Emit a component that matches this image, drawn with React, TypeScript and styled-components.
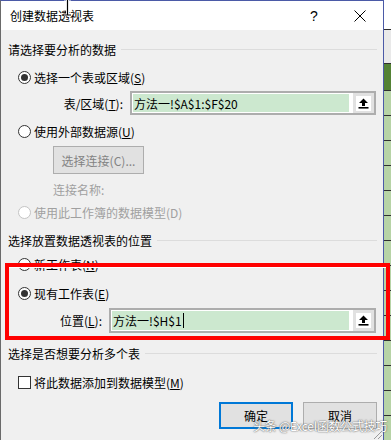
import styled, { createGlobalStyle } from 'styled-components';

const GlobalStyle = createGlobalStyle`
  html, body {
    margin: 0;
    padding: 0;
    background: #ffffff;
  }
  body {
    font-family: "Noto Sans CJK SC", "Noto Sans", sans-serif;
    font-size: 12px;
    color: #000000;
  }
`;

const COLOR = {
  body: '#f0f0f0',
  border: '#adadad',
  btn: '#e1e1e1',
  green: '#cce8cf',
  disabled: '#a0a0a0',
  frame: '#4b5aa7',
  red: '#ff0000',
};

const Screen = styled.div`
  position: relative;
  width: 391px;
  height: 440px;
  display: flex;
  overflow: hidden;
`;

const Dialog = styled.div`
  width: 384px;
  height: 440px;
  border-left: 1px solid #6a6a6a;
  border-right: 1px solid ${COLOR.frame};
  border-top: 1px solid ${COLOR.frame};
  box-sizing: border-box;
  display: flex;
  flex-direction: column;
  background: ${COLOR.body};
`;

const TitleBar = styled.div`
  height: 29px;
  background: #ffffff;
  display: flex;
  align-items: center;
  padding-left: 9px;
`;

const Title = styled.div`
  flex: 1;
  font-size: 12px;
`;

const TitleButton = styled.div`
  width: 46px;
  height: 29px;
  display: flex;
  align-items: center;
  justify-content: center;
  font-size: 14px;
  font-family: "Liberation Sans", sans-serif;
`;

const Body = styled.div`
  flex: 1;
  display: flex;
  flex-direction: column;
  padding: 0 6px 0 7px;
  position: relative;
`;

const Row = styled.div<{ $mt: number; $h?: number; $indent?: number }>`
  margin-top: ${(p) => p.$mt}px;
  height: ${(p) => p.$h ?? 18}px;
  padding-left: ${(p) => p.$indent ?? 0}px;
  display: flex;
  align-items: center;
  flex-shrink: 0;
`;

const Heading = styled.span`
  white-space: nowrap;
  margin-right: 5px;
`;

const Rule = styled.div`
  flex: 1;
  height: 1px;
  background: #dcdcdc;
`;

const Radio = styled.span<{ $checked?: boolean; $disabled?: boolean }>`
  width: 13px;
  height: 13px;
  box-sizing: border-box;
  border-radius: 50%;
  border: 1px solid ${(p) => (p.$disabled ? '#c4c4c4' : '#333333')};
  background: #ffffff;
  display: flex;
  align-items: center;
  justify-content: center;
  margin-right: 3px;
  &::after {
    content: '';
    display: ${(p) => (p.$checked ? 'block' : 'none')};
    width: 7px;
    height: 7px;
    border-radius: 50%;
    background: #333333;
  }
`;

const Check = styled.span`
  width: 13px;
  height: 13px;
  box-sizing: border-box;
  border: 1px solid #333333;
  background: #ffffff;
  margin-right: 3px;
`;

const Label = styled.span<{ $disabled?: boolean }>`
  color: ${(p) => (p.$disabled ? COLOR.disabled : '#000000')};
  white-space: nowrap;
`;

const FieldLabel = styled.span<{ $w: number }>`
  width: ${(p) => p.$w}px;
  text-align: right;
  padding-right: 7px;
  white-space: nowrap;
`;

const RefBox = styled.div`
  flex: 1;
  height: 100%;
  box-sizing: border-box;
  border: 2px solid ${COLOR.border};
  display: flex;
  margin-right: 1px;
`;

const RefInput = styled.div`
  flex: 1;
  background: #ffffff;
  padding: 1px 4px 1px 1px;
  display: flex;
`;

const RefFill = styled.div`
  flex: 1;
  background: ${COLOR.green};
  display: flex;
  align-items: center;
  padding-left: 1px;
`;

const Caret = styled.span`
  width: 1px;
  height: 15px;
  background: #000000;
  margin-left: 1px;
`;

const PickButton = styled.div`
  width: 21px;
  background: ${COLOR.btn};
  display: flex;
  align-items: center;
  justify-content: center;
`;

const PickIcon = styled.div`
  width: 15px;
  height: 15px;
  background: #ffffff;
  display: flex;
  align-items: center;
  justify-content: center;
`;

const Button = styled.div<{ $primary?: boolean; $disabled?: boolean; $w: number }>`
  width: ${(p) => p.$w}px;
  height: 100%;
  box-sizing: border-box;
  background: ${COLOR.btn};
  border: ${(p) => (p.$primary ? '2px solid #0078d7' : `1px solid ${COLOR.border}`)};
  color: ${(p) => (p.$disabled ? '#838383' : '#000000')};
  display: flex;
  align-items: center;
  justify-content: center;
  font-size: 12px;
`;

const ButtonRow = styled(Row)`
  justify-content: flex-end;
  gap: 10px;
  padding-right: 0;
`;

const Grip = styled.svg`
  position: absolute;
  right: 0;
  bottom: 0;
`;

const Watermark = styled.div`
  position: absolute;
  right: 4px;
  bottom: 6px;
  color: #ffffff;
  font-size: 12px;
  letter-spacing: -0.3px;
  text-shadow: 0 0 1px #555555, 0 0 2px #777777;
  white-space: nowrap;
`;

const Annotation = styled.div`
  position: absolute;
  left: 5px;
  top: 263px;
  width: 385px;
  height: 77px;
  box-sizing: border-box;
  border: 4px solid ${COLOR.red};
  box-shadow: inset 0 1px 0 #ffffff;
  pointer-events: none;
`;

const Sheet = styled.div`
  width: 7px;
  display: flex;
  flex-direction: column;
`;

const SheetCell = styled.div<{ $h: number; $bg: string }>`
  height: ${(p) => p.$h}px;
  background: ${(p) => p.$bg};
  border-bottom: 1px solid #2f2f2f;
  flex-shrink: 0;
`;

const Cursor = styled.svg`
  position: absolute;
  left: 63px;
  top: -2px;
`;

const U = styled.span`
  text-decoration: underline;
  text-underline-offset: 1px;
`;

function UploadIcon() {
  return (
    <svg width="11" height="11" viewBox="0 0 11 11">
      <path d="M5.5 0.5 L10 5 L7 5 L7 8 L4 8 L4 5 L1 5 Z" fill="#000" />
      <rect x="0.5" y="9" width="10" height="1.6" fill="#000" />
    </svg>
  );
}

const sheetRows = [
  { h: 29, bg: '#ffffff' },
  { h: 33, bg: '#e9e9e9' },
  { h: 26, bg: '#548235' },
  ...Array.from({ length: 15 }, () => ({ h: 24, bg: '#b7d3a6' })),
];

export default function App() {
  return (
    <>
      <GlobalStyle />
      <Screen>
        <Dialog>
          <TitleBar>
            <Title>创建数据透视表</Title>
            <TitleButton>?</TitleButton>
            <TitleButton>
              <svg width="12" height="12" viewBox="0 0 12 12">
                <path d="M0.5 0.5 L11.5 11.5 M11.5 0.5 L0.5 11.5" stroke="#000" strokeWidth="1" />
              </svg>
            </TitleButton>
          </TitleBar>
          <Body>
            <Row $mt={10}>
              <Heading>请选择要分析的数据</Heading>
              <Rule />
            </Row>
            <Row $mt={10} $indent={10}>
              <Radio $checked />
              <Label>
                选择一个表或区域(<U>S</U>)
              </Label>
            </Row>
            <Row $mt={5} $h={24}>
              <FieldLabel $w={115}>
                表/区域(<U>T</U>):
              </FieldLabel>
              <RefBox>
                <RefInput>
                  <RefFill>方法一!$A$1:$F$20</RefFill>
                </RefInput>
                <PickButton>
                  <PickIcon>
                    <UploadIcon />
                  </PickIcon>
                </PickButton>
              </RefBox>
            </Row>
            <Row $mt={7} $indent={10}>
              <Radio />
              <Label>
                使用外部数据源(<U>U</U>)
              </Label>
            </Row>
            <Row $mt={6} $h={28} $indent={45}>
              <Button $w={91} $disabled>
                选择连接(C)...
              </Button>
            </Row>
            <Row $mt={6} $indent={45}>
              <Label $disabled>连接名称:</Label>
            </Row>
            <Row $mt={5} $indent={10}>
              <Radio $disabled />
              <Label $disabled>使用此工作簿的数据模型(D)</Label>
            </Row>
            <Row $mt={10}>
              <Heading>选择放置数据透视表的位置</Heading>
              <Rule />
            </Row>
            <Row $mt={6} $indent={10}>
              <Radio />
              <Label>
                新工作表(<U>N</U>)
              </Label>
            </Row>
            <Row $mt={11} $indent={10}>
              <Radio $checked />
              <Label>
                现有工作表(<U>E</U>)
              </Label>
            </Row>
            <Row $mt={6} $h={25}>
              <FieldLabel $w={94}>
                位置(<U>L</U>):
              </FieldLabel>
              <RefBox>
                <RefInput>
                  <RefFill>
                    方法一!$H$1
                    <Caret />
                  </RefFill>
                </RefInput>
                <PickButton>
                  <PickIcon>
                    <UploadIcon />
                  </PickIcon>
                </PickButton>
              </RefBox>
            </Row>
            <Row $mt={11}>
              <Heading>选择是否想要分析多个表</Heading>
              <Rule />
            </Row>
            <Row $mt={11} $indent={10}>
              <Check />
              <Label>
                将此数据添加到数据模型(<U>M</U>)
              </Label>
            </Row>
            <ButtonRow $mt={11} $h={27}>
              <Button $w={74} $primary>
                确定
              </Button>
              <Button $w={74}>取消</Button>
            </ButtonRow>
            <Grip width="11" height="11" viewBox="0 0 11 11">
              <path d="M10 2 L2 10 M10 6 L6 10" stroke="#9a9a9a" strokeWidth="1" />
            </Grip>
          </Body>
        </Dialog>
        <Sheet>
          {sheetRows.map((r, i) => (
            <SheetCell key={i} $h={r.h} $bg={r.bg} />
          ))}
        </Sheet>
        <Annotation />
        <Watermark>头条 @Excel函数公式技巧</Watermark>
        <Cursor width="9" height="18" viewBox="0 0 9 18">
          <path d="M1 1 H8 M4.5 1 V17 M1 17 H8" stroke="#ffffff" strokeWidth="3" />
          <path d="M1 1 H8 M4.5 1 V17 M1 17 H8" stroke="#000000" strokeWidth="1.2" />
        </Cursor>
      </Screen>
    </>
  );
}
